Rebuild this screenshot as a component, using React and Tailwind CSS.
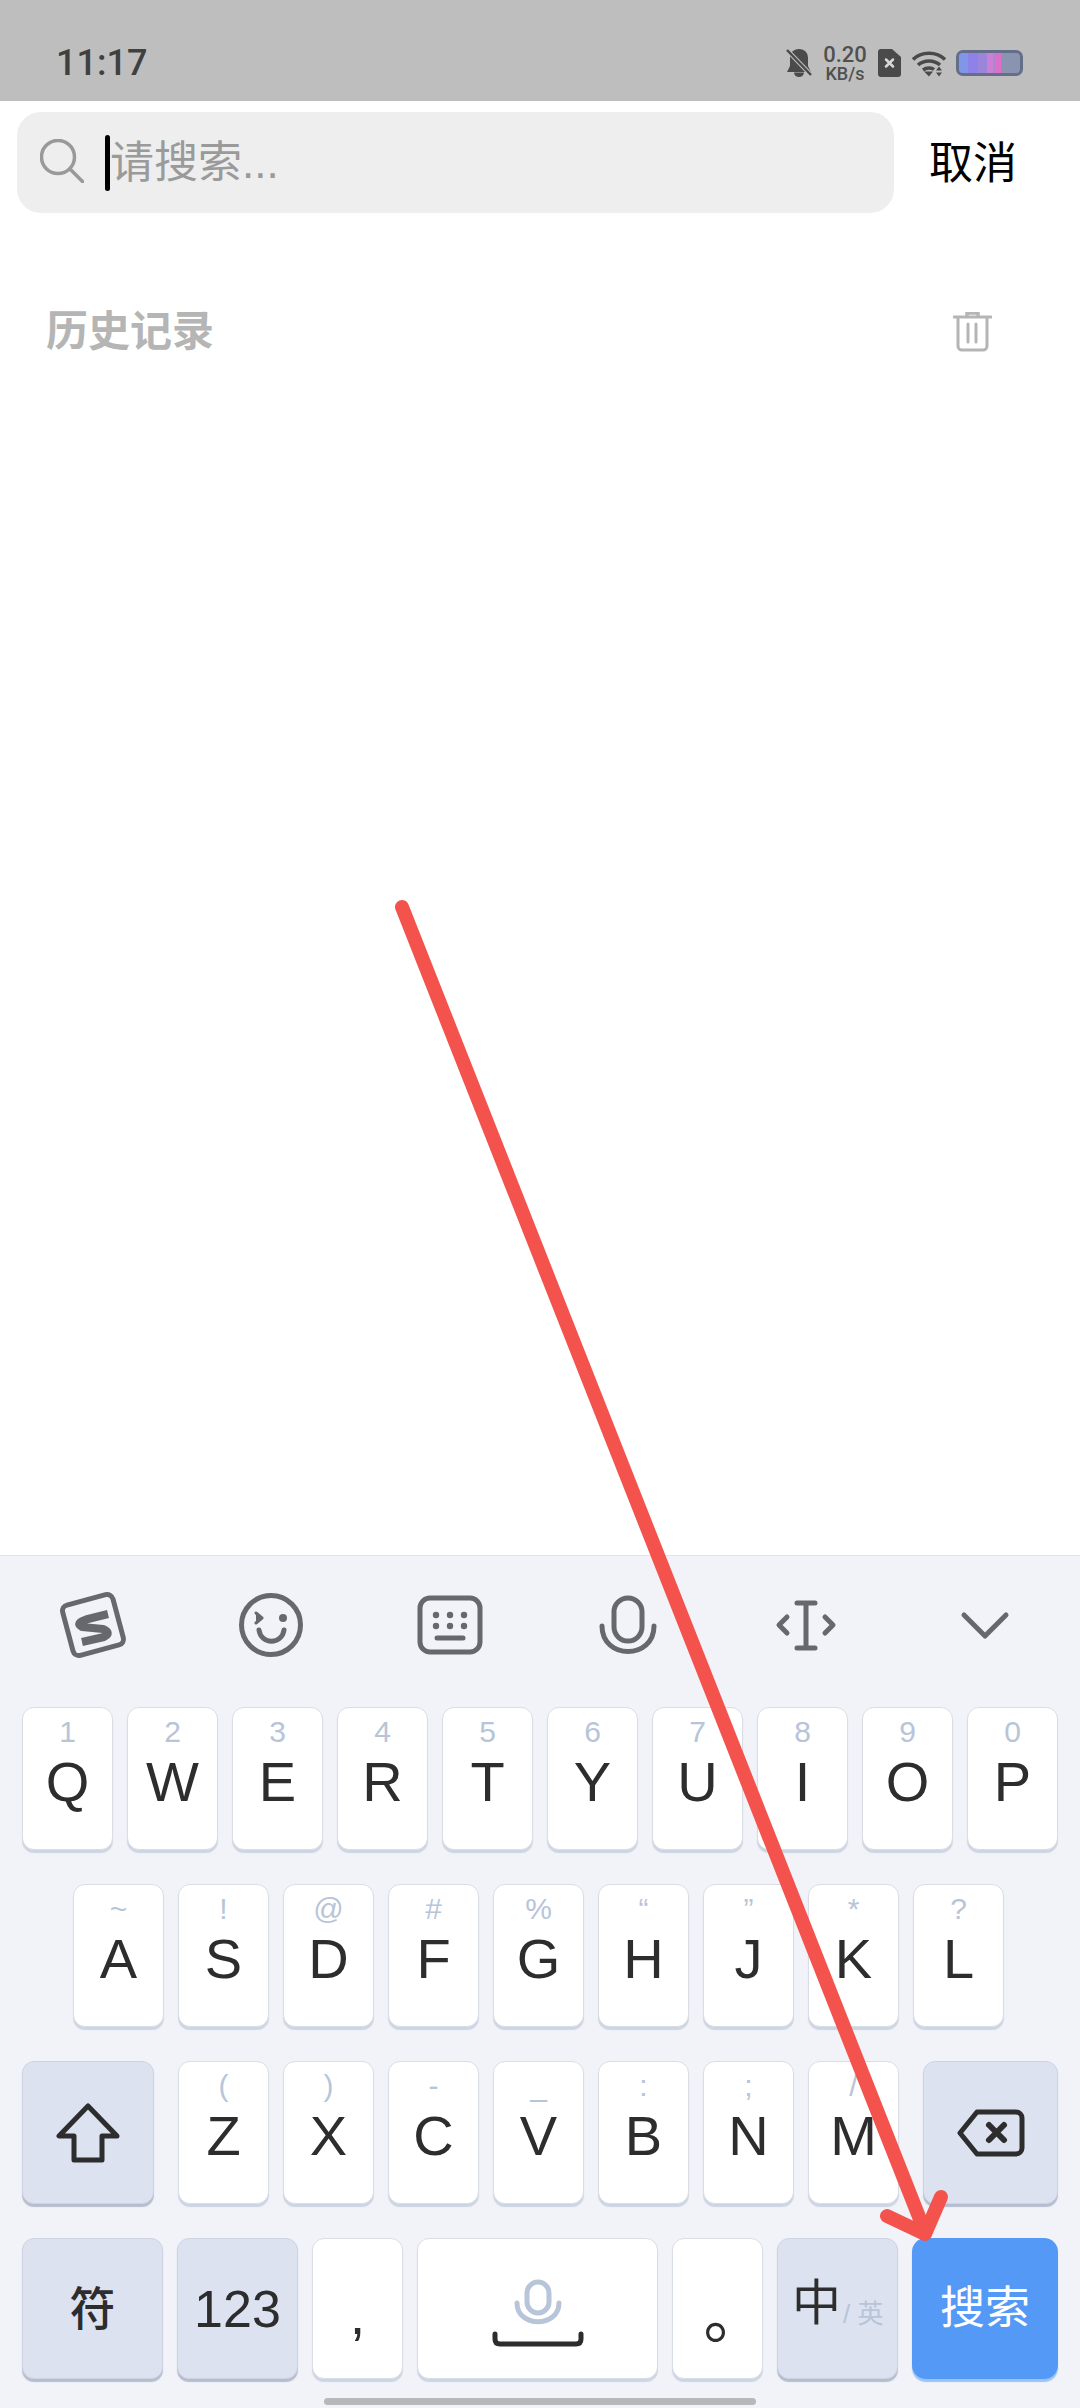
const row1 = [
  ['1', 'Q'], ['2', 'W'], ['3', 'E'], ['4', 'R'], ['5', 'T'],
  ['6', 'Y'], ['7', 'U'], ['8', 'I'], ['9', 'O'], ['0', 'P'],
];
const row2 = [
  ['~', 'A'], ['!', 'S'], ['@', 'D'], ['#', 'F'], ['%', 'G'],
  ['“', 'H'], ['”', 'J'], ['*', 'K'], ['?', 'L'],
];
const row3 = [
  ['(', 'Z'], [')', 'X'], ['-', 'C'], ['_', 'V'], [':', 'B'], [';', 'N'], ['/', 'M'],
];

const whiteKey = 'rounded-[12px] bg-white border border-[#d9dde6] shadow-[0_3px_1px_#cdd5e3]';
const funcKey = 'rounded-[12px] bg-[#dce2ef] border border-[#cdd3e0] shadow-[0_3px_1px_#b5bdcf]';

const LetterKey = ({ hint, letter }) => (
  <div className={`${whiteKey} w-[91px] h-full flex flex-col items-center`}>
    <span className="mt-[4px] h-[40px] text-[30px] leading-[40px] text-[#b8c4d8]">{hint}</span>
    <span className="text-[56px] leading-[60px] text-[#2d2d2d]">{letter}</span>
  </div>
);

const ToolIcon = ({ children }) => (
  <div className="flex items-center justify-center">
    <svg width="70" height="70" viewBox="0 0 70 70" fill="none" stroke="#66686e" strokeWidth="5" strokeLinecap="round" strokeLinejoin="round">
      {children}
    </svg>
  </div>
);

const App = () => {
  return (
    <div className="relative w-[1080px] h-[2408px] overflow-hidden bg-white flex flex-col font-['Liberation_Sans','Noto_Sans_CJK_SC',sans-serif]">

      {/* Status bar */}
      <div className="h-[101px] shrink-0 bg-[#bebebe] pt-[25px] pl-[56px] pr-[57px] flex items-center justify-between">
        <span className="font-['Roboto',sans-serif] font-medium text-[36px] leading-none text-[#404040]">11:17</span>
        <div className="flex items-center">
          {/* bell off */}
          <svg width="26" height="28" viewBox="0 0 26 28" fill="#4a4a4a">
            <path d="M13 0c-5.500 0-9 3.500-9 9v8l-3 6h24l-3-6V9c0-5.500-3.500-9-9-9z" />
            <path d="M8 23.500h10a5 4.500 0 0 1-10 0z" />
            <path d="M1 1l24 25" stroke="#bebebe" strokeWidth="4.500" />
            <path d="M1 1l24 25" stroke="#4a4a4a" strokeWidth="2.500" />
          </svg>
          <div className="ml-[11px] w-[44px] flex flex-col items-center font-['Roboto',sans-serif] font-medium text-[#505050]">
            <span className="text-[22px] leading-[21px]">0.20</span>
            <span className="text-[18px] leading-[17px]">KB/s</span>
          </div>
          {/* sim with x */}
          <svg className="ml-[11px]" width="23" height="28" viewBox="0 0 23 28">
            <path d="M3 0h11l9 8v17a3 3 0 0 1-3 3H3a3 3 0 0 1-3-3V3a3 3 0 0 1 3-3z" fill="#4a4a4a" />
            <path d="M8 10.500l7 7M15 10.500l-7 7" stroke="#d8d8d8" strokeWidth="2.500" strokeLinecap="round" />
          </svg>
          {/* wifi */}
          <svg className="ml-[11px]" width="34" height="27" viewBox="0 0 34 27" fill="none" stroke="#4a4a4a" strokeWidth="3.500">
            <path d="M1 9.500C9 1 25 1 33 9.500" />
            <path d="M6 15c6-5.500 16-5.500 22 0" />
            <path d="M11 20c3.500-2.500 8.500-2.500 11 -.5" />
            <path d="M12 21.500l5 5 4-5z" fill="#4a4a4a" stroke="none" />
            <path d="M27 16.500l3 4h-6zM27 26.500l3-4h-6z" fill="#4a4a4a" stroke="none" />
          </svg>
          {/* battery */}
          <div className="ml-[10px] w-[67px] h-[26px] rounded-[7px] border-[3px] border-[#646e8a] bg-[#8a93b0] overflow-hidden flex">
            <div className="w-[9px] bg-[#7f97e6]" />
            <div className="w-[10px] bg-[#8f80ea]" />
            <div className="w-[9px] bg-[#9a86d8]" />
            <div className="w-[6px] bg-[#cc7fd6]" />
            <div className="w-[2px] bg-[#a98ac8]" />
            <div className="w-[6px] bg-[#dc6fca]" />
          </div>
        </div>
      </div>

      {/* Search row */}
      <div className="mt-[11px] pl-[17px] flex items-center">
        <div className="w-[877px] h-[101px] rounded-[24px] bg-[#eeeeee] pl-[23px] flex items-center">
          <svg className="-mt-[4px]" width="44" height="44" viewBox="0 0 44 44" fill="none" stroke="#999999" strokeWidth="3.500" strokeLinecap="round">
            <circle cx="18" cy="18" r="16.500" />
            <path d="M30 30l13 13" />
          </svg>
          <div className="ml-[21px] w-[5px] h-[56px] rounded-full bg-black" />
          <span className="mt-[1px] text-[44px] leading-none text-[#9a9a9a]">请搜索...</span>
        </div>
        <span className="ml-[35px] mt-[3px] text-[44px] leading-none text-black">取消</span>
      </div>

      {/* History */}
      <div className="mt-[88px] h-[60px] pl-[46px] pr-[88px] flex items-center justify-between">
        <span className="mt-[1px] text-[42px] leading-none font-semibold text-[#b5b5b5]">历史记录</span>
        <svg className="mt-[2px]" width="39" height="40" viewBox="0 0 39 40" fill="none" stroke="#b5b5b5" strokeWidth="3" strokeLinecap="round">
          <path d="M1 5h37" />
          <path d="M14 3.500V1h11v2.500" strokeWidth="3.500" />
          <path d="M5 6v28a4 4 0 0 0 4 4h21a4 4 0 0 0 4-4V6" />
          <path d="M15 12v18M23 12v18" />
        </svg>
      </div>

      {/* Keyboard */}
      <div className="mt-auto h-[853px] shrink-0 bg-[#f1f3f8] border-t border-[#e3e3e3] flex flex-col">
        <div className="h-[138px] pl-[4px] pr-[6px] grid grid-cols-6 items-center">
          <ToolIcon>
            <rect x="9" y="9" width="52" height="52" rx="6" transform="rotate(-15 35 35)" />
            <path d="M50 24L28 29.500Q17 33 24 37L45 39Q54 43 46 47L24 52" strokeWidth="8" strokeLinecap="butt" />
          </ToolIcon>
          <ToolIcon>
            <circle cx="35" cy="35" r="29.500" />
            <path d="M20 23l6 5-6 5" fill="#66686e" strokeWidth="3" />
            <circle cx="47" cy="28" r="4" fill="#66686e" stroke="none" />
            <path d="M23 40c2 15 23 15 25 0" />
          </ToolIcon>
          <ToolIcon>
            <rect x="5" y="8" width="60" height="54" rx="10" />
            <g fill="#66686e" stroke="none">
              <circle cx="21" cy="25" r="3.200" />
              <circle cx="35" cy="25" r="3.200" />
              <circle cx="49" cy="25" r="3.200" />
              <circle cx="21" cy="36" r="3.200" />
              <circle cx="35" cy="36" r="3.200" />
              <circle cx="49" cy="36" r="3.200" />
            </g>
            <path d="M22 48h26" />
          </ToolIcon>
          <ToolIcon>
            <rect x="21" y="8" width="28" height="43" rx="14" />
            <path d="M9 36c0 34 52 34 52 0" />
          </ToolIcon>
          <ToolIcon>
            <path d="M35 13v45M26 13h18M26 58h18" />
            <path d="M16 27l-8 8 8 8M54 27l8 8-8 8" />
          </ToolIcon>
          <ToolIcon>
            <path d="M14 25l21 21 21-21" />
          </ToolIcon>
        </div>

        <div className="mt-[13px] flex flex-col gap-[34px]">
          <div className="h-[143px] pl-[22px] flex gap-[14px]">
            {row1.map(([hint, letter]) => <LetterKey key={letter} hint={hint} letter={letter} />)}
          </div>
          <div className="h-[143px] pl-[73px] flex gap-[14px]">
            {row2.map(([hint, letter]) => <LetterKey key={letter} hint={hint} letter={letter} />)}
          </div>
          <div className="h-[143px] pl-[22px] flex gap-[14px]">
            <div className={`${funcKey} w-[132px] mr-[10px] flex items-center justify-center`}>
              <svg width="64" height="60" viewBox="0 0 64 60" fill="none" stroke="#2d2d2d" strokeWidth="5" strokeLinejoin="round">
                <path d="M32 3L3 33h15v24h28V33h15z" />
              </svg>
            </div>
            {row3.map(([hint, letter]) => <LetterKey key={letter} hint={hint} letter={letter} />)}
            <div className={`${funcKey} ml-[10px] w-[135px] flex items-center justify-center`}>
              <svg width="68" height="48" viewBox="0 0 68 48" fill="none" stroke="#2d2d2d" strokeWidth="5" strokeLinejoin="round" strokeLinecap="round">
                <path d="M20 3h39a6 6 0 0 1 6 6v30a6 6 0 0 1-6 6H20L3 24z" />
                <path d="M32 16l15 15M47 16L32 31" strokeWidth="6" />
              </svg>
            </div>
          </div>
          <div className="h-[141px] pl-[22px] flex">
            <div className={`${funcKey} w-[141px] flex items-center justify-center text-[46px] font-medium leading-none text-[#2d2d2d]`}>符</div>
            <div className={`${funcKey} ml-[14px] w-[121px] flex items-center justify-center text-[52px] leading-none text-[#2d2d2d]`}>123</div>
            <div className={`${whiteKey} ml-[14px] w-[91px] flex justify-center pt-[48px] text-[56px] leading-none text-[#2d2d2d]`}>,</div>
            <div className={`${whiteKey} ml-[14px] w-[241px] flex flex-col items-center pt-[40px]`}>
              <svg width="48" height="46" viewBox="0 0 48 46" fill="none" stroke="#b8c4d8" strokeWidth="5" strokeLinecap="round">
                <rect x="13" y="3" width="22" height="31" rx="11" />
                <path d="M3 24c0 25 42 25 42 0" />
              </svg>
              <svg className="mt-[6px]" width="92" height="16" viewBox="0 0 92 16" fill="none" stroke="#2d2d2d" strokeWidth="5" strokeLinecap="round">
                <path d="M3 3v5q0 5 5 5h76q5 0 5-5V3" />
              </svg>
            </div>
            <div className={`${whiteKey} ml-[14px] w-[91px] flex justify-center pl-[34px] pt-[47px] text-[62px] leading-none text-[#2d2d2d]`}>。</div>
            <div className={`${funcKey} ml-[14px] w-[121px] pl-[14px] pt-[36px] flex items-start`}>
              <span className="text-[49px] leading-[56px] text-[#2d2d2d]">中</span>
              <span className="mt-[24px] ml-[2px] text-[26px] leading-[30px] text-[#b8c4d8]">/ 英</span>
            </div>
            <div className="ml-[14px] w-[146px] rounded-[14px] bg-[#5599f7] shadow-[0_3px_1px_#9cc3f5] flex items-center justify-center text-[45px] leading-none text-white">搜索</div>
          </div>
        </div>

        {/* Home indicator */}
        <div className="mt-[19px] mx-auto w-[432px] h-[7px] rounded-full bg-[#b8b8b8]" />
      </div>

      {/* Red arrow annotation */}
      <svg className="absolute inset-0 pointer-events-none" width="1080" height="2408" viewBox="0 0 1080 2408" fill="none" stroke="#f4524d" strokeLinecap="round" strokeLinejoin="round">
        <path d="M402 907L925 2232" strokeWidth="14" />
        <path d="M887 2216L925 2234L941 2197" strokeWidth="14" />
      </svg>
    </div>
  );
};

export default App;
